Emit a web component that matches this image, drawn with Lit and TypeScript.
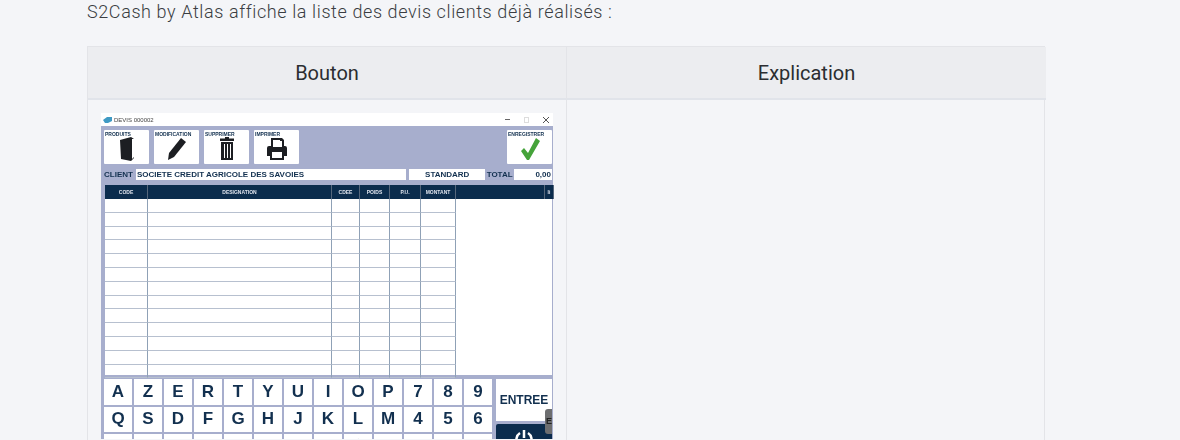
import { LitElement, html, css } from 'lit';
import { customElement } from 'lit/decorators.js';

const rows = Array.from({ length: 13 });
const cols = Array.from({ length: 6 });
const keys1 = ['A', 'Z', 'E', 'R', 'T', 'Y', 'U', 'I', 'O', 'P', '7', '8', '9'];
const keys2 = ['Q', 'S', 'D', 'F', 'G', 'H', 'J', 'K', 'L', 'M', '4', '5', '6'];
const keys3 = ['W', 'X', 'C', 'V', 'B', 'N', '', '', '⇧', '', '1', '2', '3'];

@customElement('app-root')
export class AppRoot extends LitElement {
  static styles = css`
    :host {
      display: block;
      height: 440px;
      overflow: hidden;
      background: #f4f5f8;
      font-family: 'Roboto', sans-serif;
    }
    .page {
      padding: 0 135px 0 87px;
    }
    .intro {
      margin: 0;
      height: 46px;
      font-size: 18px;
      font-weight: 300;
      line-height: 24px;
      letter-spacing: 0.6px;
      color: #3a3d42;
    }
    .table {
      display: grid;
      grid-template-columns: 478px 480px;
      border: 1px solid #e3e4e8;
      border-bottom: 0;
    }
    .head {
      height: 51px;
      display: flex;
      align-items: center;
      justify-content: center;
      background: #ecedf0;
      border-bottom: 2px solid #e1e4ea;
      font-size: 20px;
      color: #2b2d31;
    }
    .head + .head,
    .cell + .cell {
      border-left: 1px solid #e3e4e8;
    }
    .cell {
      height: 400px;
      padding: 13px 0 0 13px;
      box-sizing: border-box;
    }
    .shot {
      width: 452px;
      background: #fff;
      font-family: 'Liberation Sans Narrow', 'Liberation Sans', sans-serif;
      font-weight: 700;
      color: #12304f;
      filter: blur(0.3px);
      position: relative;
    }
    .title {
      height: 13px;
      display: flex;
      align-items: center;
      gap: 2px;
      padding-left: 2px;
      font-size: 6px;
      font-weight: 400;
      color: #444;
    }
    .title svg {
      flex: none;
    }
    .winbtns {
      margin-left: auto;
      display: flex;
      align-items: center;
      gap: 14px;
      padding-right: 4px;
    }
    .body {
      background: #a7aecd;
      padding: 4px 1px 0 3px;
    }
    .tools {
      display: flex;
      gap: 5px;
      height: 34px;
    }
    .tool {
      width: 45px;
      background: #fff;
      border-radius: 1px;
      font-size: 5px;
      line-height: 6px;
      padding: 1px 0 0 1px;
      box-sizing: border-box;
      display: flex;
      flex-direction: column;
      align-items: center;
    }
    .tool span {
      align-self: flex-start;
    }
    .tool.save {
      margin-left: auto;
    }
    .client {
      display: flex;
      align-items: center;
      height: 11px;
      margin-top: 5px;
      font-size: 8px;
    }
    .client b {
      width: 32px;
    }
    .client .field {
      background: #fff;
      height: 11px;
      display: flex;
      align-items: center;
      box-sizing: border-box;
    }
    .name {
      width: 271px;
      padding-left: 1px;
    }
    .std {
      width: 76px;
      margin-left: 3px;
      justify-content: center;
    }
    .client .lbl {
      width: 29px;
      text-align: center;
    }
    .tot {
      width: 38px;
      justify-content: flex-end;
      padding-right: 1px;
    }
    .grid {
      margin-top: 5px;
      margin-left: 1px;
      background: #fff;
      height: 190px;
      display: grid;
      grid-template-columns: 43px 184px 28px 30px 31px 35px 89px 9px;
      grid-template-rows: 14px;
      align-content: start;
      position: relative;
    }
    .th {
      background: #0b2c4d;
      color: #dfe4ee;
      font-size: 5px;
      display: flex;
      align-items: center;
      justify-content: center;
      border-right: 1px solid #56677c;
    }
    .lines {
      grid-column: 1 / 7;
      display: grid;
      grid-template-columns: 43px 184px 28px 30px 31px 35px;
      grid-auto-rows: 13.8px;
    }
    .td {
      border-bottom: 1px solid #b7c0cf;
      border-right: 1px solid #8fa1b6;
    }
    .keys {
      margin-top: 4px;
      display: flex;
      gap: 2px;
      height: 60px;
      overflow: hidden;
    }
    .keypad {
      display: grid;
      grid-template-columns: repeat(13, 28px);
      grid-auto-rows: 25.5px;
      gap: 2px;
      width: 390px;
    }
    .key {
      background: #fff;
      display: flex;
      align-items: center;
      justify-content: center;
      font-size: 17px;
      color: #12304f;
    }
    .side {
      flex: 1;
      display: flex;
      flex-direction: column;
      gap: 3px;
      position: relative;
    }
    .enter {
      height: 42px;
      flex: none;
      background: #fff;
      display: flex;
      align-items: center;
      justify-content: center;
      font-size: 12px;
    }
    .power {
      flex: none;
      height: 40px;
      background: #0b2c4d;
      border-radius: 2px 0 0 0;
      display: flex;
      justify-content: center;
      padding-top: 4px;
    }
    .tab {
      position: absolute;
      right: 0;
      top: 30px;
      width: 7px;
      height: 25px;
      background: #6d6e70;
      border-radius: 3px 0 0 3px;
      color: #222;
      font-size: 9px;
      line-height: 25px;
      padding-left: 1px;
      box-sizing: border-box;
    }
  `;

  render() {
    return html`
      <div class="page">
        <p class="intro">S2Cash by Atlas affiche la liste des devis clients déjà réalisés :</p>
        <div class="table">
          <div class="head">Bouton</div>
          <div class="head">Explication</div>
          <div class="cell">
            <div class="shot">
              <div class="title">
                <svg width="9" height="6" viewBox="0 0 9 6"><path d="M0 3l4-3h5v4l-4 2H2z" fill="#3f9ac4" /></svg>
                DEVIS 000002
                <div class="winbtns">
                  <svg width="5" height="5" viewBox="0 0 5 5"><path d="M0 2.5h5" stroke="#666" /></svg>
                  <svg width="5" height="6" viewBox="0 0 5 6"><rect x=".5" y=".5" width="4" height="5" fill="none" stroke="#ddd" /></svg>
                  <svg width="6" height="6" viewBox="0 0 6 6"><path d="M0 0l6 6M6 0L0 6" stroke="#555" /></svg>
                </div>
              </div>
              <div class="body">
                <div class="tools">
                  <div class="tool"><span>PRODUITS</span>
                    <svg width="16" height="24" viewBox="0 0 16 24"><path d="M1 3l11-3 3 2v19l-3 3-10-2zM13 2v20l2-2V2z" fill="#1c1e22" /></svg>
                  </div>
                  <div class="tool"><span>MODIFICATION</span>
                    <svg width="20" height="24" viewBox="0 0 20 24"><path d="M14 1l5 4L7 20l-6 3 1-7z" fill="#1c1e22" /></svg>
                  </div>
                  <div class="tool"><span>SUPPRIMER</span>
                    <svg width="14" height="24" viewBox="0 0 14 24"><path d="M5 0h4v1.500h5V4H0V1.500h5zM1 5h12v18H1zM4 7v14h1V7zm3 0v14h1V7zm3 0v14h1V7z" fill="#1c1e22" fill-rule="evenodd" /></svg>
                  </div>
                  <div class="tool"><span>IMPRIMER</span>
                    <svg width="20" height="24" viewBox="0 0 20 24"><path d="M4 1h11l2 2v6h1a2 2 0 0 1 2 2v8h-3v4H3v-4H0v-8a2 2 0 0 1 2-2h2zm2 2v7h9V4h-2V3zM5 15v6h10v-6z" fill="#1c1e22" fill-rule="evenodd" /></svg>
                  </div>
                  <div class="tool save"><span>ENREGISTRER</span>
                    <svg width="20" height="24" viewBox="0 0 20 24"><path d="M1 14l3-3 4 5L16 1l4 3-11 19h-2z" fill="#45a33a" /></svg>
                  </div>
                </div>
                <div class="client">
                  <b>CLIENT</b>
                  <div class="field name">SOCIETE CREDIT AGRICOLE DES SAVOIES</div>
                  <div class="field std">STANDARD</div>
                  <div class="lbl">TOTAL</div>
                  <div class="field tot">0,00</div>
                </div>
                <div class="grid">
                  ${['CODE', 'DESIGNATION', 'CDEE', 'POIDS', 'P.U.', 'MONTANT', '', 'li'].map(
                    (t) => html`<div class="th">${t}</div>`
                  )}
                  <div class="lines">
                    ${rows.map(() => cols.map(() => html`<div class="td"></div>`))}
                  </div>
                </div>
                <div class="keys">
                  <div class="keypad">
                    ${[...keys1, ...keys2, ...keys3].map((k) => html`<div class="key">${k}</div>`)}
                  </div>
                  <div class="side">
                    <div class="enter">ENTREE</div>
                    <div class="power">
                      <svg width="20" height="20" viewBox="0 0 20 20"><path d="M6 5a7.500 7.500 0 1 0 8 0M10 2v8" fill="none" stroke="#fff" stroke-width="2.500" /></svg>
                    </div>
                    <div class="tab">E</div>
                  </div>
                </div>
              </div>
            </div>
          </div>
          <div class="cell"></div>
        </div>
      </div>
    `;
  }
}
